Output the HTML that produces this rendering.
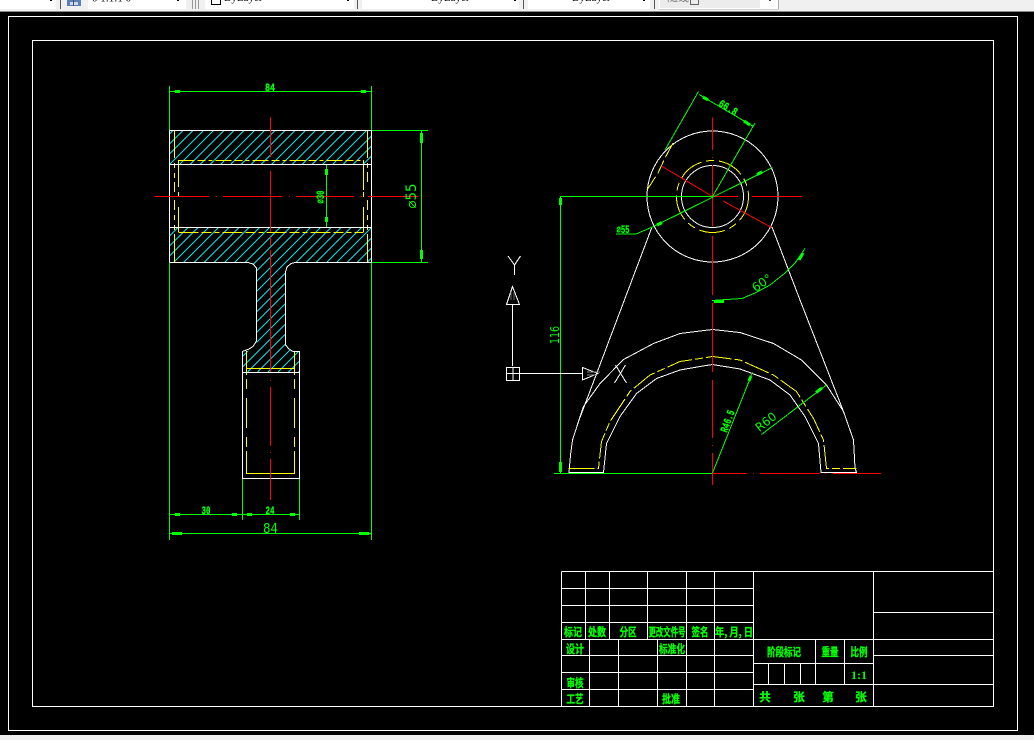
<!DOCTYPE html>
<html><head><meta charset="utf-8"><title>CAD</title>
<style>
html,body{margin:0;padding:0;background:#000;width:1034px;height:740px;overflow:hidden}
svg{display:block;position:absolute;left:0;top:0}
.w{stroke:#fff;fill:none}.y{stroke:#ff0;fill:none}.r{stroke:#f00;fill:none}.g{stroke:#0f0;fill:none}
.a{stroke:#0f0;stroke-width:3;fill:none}
text{fill:#0f0;font-family:"Liberation Sans","WenQuanYi Zen Hei","Noto Sans CJK SC",sans-serif}
.t{font-size:11.5px;font-weight:bold;text-anchor:middle;stroke:#0f0;stroke-width:.35px;font-family:"WenQuanYi Zen Hei","Noto Sans CJK SC",sans-serif}
.n{font-size:11px;font-weight:bold;text-anchor:middle;stroke:#0f0;stroke-width:.3px;font-family:"Liberation Mono",monospace}
.l{font-size:15px;text-anchor:middle;font-family:"DejaVu Sans",sans-serif;font-weight:normal}
.b{font-size:11px;fill:#000;font-family:"Liberation Serif",serif}
</style></head><body>
<svg width="1034" height="740" viewBox="0 0 1034 740" xmlns="http://www.w3.org/2000/svg">
<defs>
<clipPath id="hc">
<path d="M170 130H371V164H170Z"/>
<path d="M170 228H371V262H294Q285 264 285 273V340Q285 349 294 351H299V372H243V351H248Q257 349 257 340V273Q257 264 248 262H170Z"/>
</clipPath>
</defs>
<rect width="1034" height="740" fill="#000"/>
<!-- toolbar -->
<rect width="1034" height="11" fill="#f0f0f0"/>
<rect y="11" width="1034" height="1" fill="#8a8a8a"/>
<g shape-rendering="crispEdges">
<rect x="0" y="0" width="56" height="9" fill="#fff"/>
<rect x="50" y="0" width="2" height="1" fill="#000"/>
<rect x="60" y="0" width="1" height="9" fill="#555"/>
<rect x="67" y="0" width="14" height="6" fill="#5a7fb5"/>
<rect x="70" y="2" width="8" height="3" fill="#cfd8e8"/>
<rect x="73" y="0" width="1" height="6" fill="#34527f"/>
<rect x="88" y="0" width="98" height="9" fill="#fff"/>
<rect x="177" y="0" width="2" height="1" fill="#000"/>
<rect x="192" y="0" width="1" height="9" fill="#999"/><rect x="195" y="0" width="1" height="9" fill="#999"/><rect x="198" y="0" width="1" height="9" fill="#999"/>
<rect x="205" y="0" width="149" height="9" fill="#fff"/>
<rect x="347" y="0" width="2" height="1" fill="#000"/>
<rect x="357" y="0" width="1" height="9" fill="#555"/>
<rect x="362" y="0" width="157" height="9" fill="#fff"/>
<rect x="514" y="0" width="2" height="1" fill="#000"/>
<rect x="523" y="0" width="1" height="9" fill="#555"/>
<rect x="528" y="0" width="122" height="9" fill="#fff"/>
<rect x="643" y="0" width="2" height="1" fill="#000"/>
<rect x="654" y="0" width="1" height="9" fill="#555"/>
<rect x="659" y="0" width="119" height="9" fill="#fff"/>
<rect x="660" y="0" width="100" height="8" fill="#ececec"/>
<rect x="769" y="0" width="2" height="1" fill="#444"/>
<rect x="778" y="0" width="1" height="10" fill="#aaa"/>
<rect x="659" y="9" width="120" height="1" fill="#ccc"/>
<path d="M211.5 0V4.5H220.5V0" stroke="#000" fill="none"/>
<path d="M690.5 0V4.5H698.5V0" stroke="#666" fill="none"/>
</g>
<text class="b" x="92" y="1.5" style="stroke:none">0 1:1:1 0</text>
<text class="b" x="224" y="1">ByLayer</text>
<text class="b" x="431" y="1">ByLayer</text>
<text class="b" x="572" y="1">ByLayer</text>
<text class="b" x="667" y="1" style="fill:#777">随线</text>
<rect y="735" width="1034" height="5" fill="#f0f0f0"/>

<g shape-rendering="crispEdges" stroke-width="1">
<!-- frames -->
<rect class="w" x="8.5" y="16.5" width="1009" height="714"/>
<rect class="w" x="32.5" y="40.5" width="961" height="666"/>

<!-- left view hatch -->
<path clip-path="url(#hc)" stroke="#00e0e0" fill="none" d="M-68.7 372l242-242m-231.8 242l242-242m-231.8 242l242-242m-231.8 242l242-242m-231.8 242l242-242m-231.8 242l242-242m-231.8 242l242-242m-231.8 242l242-242m-231.8 242l242-242m-231.8 242l242-242m-231.8 242l242-242m-231.8 242l242-242m-231.8 242l242-242m-231.8 242l242-242m-231.8 242l242-242m-231.8 242l242-242m-231.8 242l242-242m-231.8 242l242-242m-231.8 242l242-242m-231.8 242l242-242m-231.8 242l242-242m-231.8 242l242-242m-231.8 242l242-242m-231.8 242l242-242m-231.8 242l242-242m-231.8 242l242-242m-231.8 242l242-242m-231.8 242l242-242m-231.8 242l242-242m-231.8 242l242-242m-231.8 242l242-242m-231.8 242l242-242m-231.8 242l242-242m-231.8 242l242-242m-231.8 242l242-242m-231.8 242l242-242m-231.8 242l242-242m-231.8 242l242-242m-231.8 242l242-242m-231.8 242l242-242m-231.8 242l242-242m-231.8 242l242-242m-231.8 242"/>

<!-- left view dims -->
<path class="g" d="M169.5 86V540M371.5 86V540M170 91.5H371"/>
<path class="a" d="M175 91.5H180M361 91.5H366"/>
<path class="g" d="M371 130.5H428M371 262.5H428M421.5 130.5V262.5"/>
<path class="a" d="M421.5 133V143M421.5 250V259"/>
<path class="g" d="M326.5 164.5V227.5"/>
<path class="a" d="M326.5 169V175M326.5 217V222"/>
<path class="g" d="M170 514.5H299.5M242.5 478V520M299.5 478V520"/>
<path class="a" d="M175 514.5H180M232 514.5H237M247 514.5H252M290 514.5H295"/>
<path class="g" d="M170 533.5H371"/>
<path class="a" d="M172 533.5H182M359 533.5H369"/>

<!-- left view yellow -->
<path class="y" d="M174.5 131V158M367.5 131V158M174.5 234V262M367.5 234V262M246.5 351V375M294.5 351V375"/>
<path class="y" d="M178.5 160.5H363.5" stroke-dasharray="16 3 8 3 4 3"/>
<path class="y" d="M178.5 232.5H363.5" stroke-dasharray="20 3 10 3 5 3"/>
<path class="y" d="M174.5 163V168M174.5 173V178M174.5 182V192M174.5 200V210M174.5 215V220M174.5 225V230M367.5 163V168M367.5 172V182M367.5 200V210M367.5 215V220M367.5 225V230"/>
<path class="y" d="M178.5 160V187M178.5 192V197M178.5 207V232M363.5 160V190M363.5 192V197M363.5 207V232"/>
<path class="y" d="M246.5 368.5H294.5"/>
<path class="y" d="M246.5 379V389M246.5 398V428M246.5 437V447M246.5 452V460M246.5 451V473.5H294.5V451M294.5 379V389M294.5 398V428M294.5 437V447"/>

<!-- left view white -->
<path class="w" d="M169.5 130.5H371.5V262.5M169.5 130.5V262.5M169.5 164.5H371.5M169.5 227.5H371.5"/>
<path class="w" d="M169.5 262.5H248L253 264L256.5 268V272V341L253 346.5L249 349L242.5 351.5V478.5H299.5V351.5H293L289 349L285.5 345V272L287 267L291 263.5L295 262.5H371.5"/>
<path class="w" d="M242.5 372.5H299.5"/>

<!-- left view red -->
<path class="r" d="M154 196.5H209M216 196.5H217M223 196.5H282M289 196.5H290M296 196.5H354M361 196.5H362M368 196.5H418"/>
<path class="r" d="M270.5 117V157M270.5 171V232M270.5 237V246M270.5 250V372M270.5 380V381M270.5 387V446M270.5 452V453M270.5 459V500"/>

<!-- right view -->
<circle class="w" cx="712.5" cy="196.5" r="65.5"/>
<circle class="w" cx="712.5" cy="196.5" r="31"/>
<circle class="y" cx="712.5" cy="196.5" r="36" stroke-dasharray="26 5 8 5"/>
<path class="y" d="M673 143L665 158L658 173L647 190" stroke-dasharray="16 4 14 4"/>

<path class="w" d="M652 227L578.5 421.5L572.5 440L570.5 455L569 472.5H603.5L606.5 443.5L620 416.5L636.5 393.5L656.5 378.5L680 370L700 366.5L712.5 364.5L740 369L770 380L790 395L805 416.5L818.5 443.5L821 472.5H856.5L855 468L853.5 440L843.5 411.5L800 300L772 227"/>
<path class="w" d="M578.5 421.5L583.5 406.5L600 383.5L623.5 359.5L653.5 343.5L680 333.5L700 331L712.5 329.5L740 332.5L773.5 343.5L801.5 360L826.5 385L843.5 411.5"/>
<path class="y" d="M568.5 468.5H598.5L601.5 441.5L610 421.5L630 391.5L650 375L680 361.5L700 358.5L712.5 356.5L740 360L773.5 375L796.5 391.5L813.5 418.5L823.5 440L826.5 468.5H856.5" stroke-dasharray="26 3 8 3"/>

<!-- right view red -->
<path class="r" d="M712.5 117.5V150M712.5 157V158M712.5 165V226M712.5 236V295M712.5 303V372M712.5 380V438M712.5 445V446M712.5 453V485"/>
<path class="r" d="M712 196.5H738M752 196.5H802"/>
<path class="r" d="M661.5 166L712.5 196.5M723 201L771.5 227.5"/>
<path class="r" d="M712 473.5H747M753 473.5H754M760 473.5H820M825 473.5H826M833 473.5H881"/>

<!-- right view dims -->
<path class="g" d="M560 196.5H712.5M560.5 196.5V473M554 473.5H712"/>
<path class="a" d="M560.5 198V205M560.5 462V472"/>
<path class="g" d="M712.5 196.5L755 123M699 94.5L753.5 126.5M698.5 91.5L665 150"/>
<path class="a" d="M703 97L708 100M744 121L750 125"/>
<path class="g" d="M772.5 167.5L653.5 226.5L636 234H616"/>
<path class="a" d="M762 172L757 174.5M657 225L662 222.5"/>
<path class="g" d="M712 300.5L742 298.5L755 293L770 285L785 273L795 263L805 248.5"/>
<path class="a" d="M714 301.5H724M803 253L799 260"/>
<path class="g" d="M712.5 473L752.5 372.5M826.5 385L761.5 434.5"/>
<path class="a" d="M751 376L749 381M822 388L816 392.5"/>

<!-- UCS -->
<path class="w" d="M512.5 366V304M520 373.5H582M506.5 367.5H519.5V380.5H506.5ZM513 367V380M507 373.5H520"/>
<path class="w" d="M506.5 304.5H519.5L512.5 286.5Z"/>
<path d="M511 300V292M514 300V292" stroke="#666"/>
<path class="w" d="M582.5 367.5V380L598 373.5Z"/>
<path d="M587 372H600M587 375H597" stroke="#888"/>
<path class="w" d="M508 256L514.5 265L520.5 256M514.5 265V275M615.5 365L626.5 383M625.5 365L614.5 383"/>

<!-- title block -->
<path class="w" d="M561.5 571.5H993M561.5 571.5V706M561.5 588.5H753M561.5 605.5H753M561.5 622.5H753M561.5 639.5H993M561.5 655.5H753M561.5 672.5H753M561.5 689.5H753"/>
<path class="w" d="M585.5 571.5V639M609.5 571.5V639M647.5 571.5V639M686.5 571.5V706M714.5 571.5V706M753.5 571.5V706M873.5 571.5V706"/>
<path class="w" d="M589.5 639.5V706M618.5 639.5V706M657.5 639.5V706"/>
<path class="w" d="M753 663.5H873M753 684.5H993M873 612.5H993M873 655.5H993M815.5 639.5V684M844.5 639.5V684M768.5 663V684M784.5 663V684M800.5 663V684"/>
</g>

<!-- dim text -->
<text class="n" x="270" y="91" textLength="10" lengthAdjust="spacingAndGlyphs">84</text>
<text class="n" x="206" y="514" textLength="9" lengthAdjust="spacingAndGlyphs">30</text>
<text class="n" x="270" y="514" textLength="9" lengthAdjust="spacingAndGlyphs">24</text>
<text class="l" x="270.5" y="533" style="font-size:13px" textLength="15" lengthAdjust="spacingAndGlyphs">84</text>
<text class="l" transform="translate(421 196) rotate(-90)" x="0" y="-5" style="font-size:14px" textLength="25" lengthAdjust="spacingAndGlyphs">⌀55</text>
<text class="n" transform="translate(325 197) rotate(-90)" x="0" y="-1" textLength="13" lengthAdjust="spacingAndGlyphs">⌀30</text>
<text class="n" transform="translate(728 108) rotate(31)" x="0" y="3" textLength="20" lengthAdjust="spacingAndGlyphs">66.8</text>
<text class="n" x="623" y="233" textLength="13" lengthAdjust="spacingAndGlyphs">⌀55</text>
<text class="l" style="font-size:12px" transform="translate(762 283) rotate(-35)" x="0" y="4">60°</text>
<text class="l" style="font-size:12px" transform="translate(559 335) rotate(-90)" x="0" y="0" textLength="18" lengthAdjust="spacingAndGlyphs">116</text>
<text class="n" transform="translate(727 421) rotate(-70)" x="0" y="4" textLength="23" lengthAdjust="spacingAndGlyphs">R46.5</text>
<text class="l" style="font-size:12px" transform="translate(766 422) rotate(-38)" x="0" y="4" textLength="23" lengthAdjust="spacingAndGlyphs">R60</text>

<!-- title text -->
<text class="t" x="573" y="636" textLength="18" lengthAdjust="spacingAndGlyphs">标记</text>
<text class="t" x="597" y="636" textLength="18" lengthAdjust="spacingAndGlyphs">处数</text>
<text class="t" x="628" y="636" textLength="17" lengthAdjust="spacingAndGlyphs">分区</text>
<text class="t" x="667" y="636" textLength="37" lengthAdjust="spacingAndGlyphs">更改文件号</text>
<text class="t" x="700" y="636" textLength="17" lengthAdjust="spacingAndGlyphs">签名</text>
<text class="t" x="734" y="636" textLength="38" lengthAdjust="spacingAndGlyphs">年, 月, 日</text>
<text class="t" x="575" y="653" textLength="18" lengthAdjust="spacingAndGlyphs">设计</text>
<text class="t" x="672" y="653" textLength="26" lengthAdjust="spacingAndGlyphs">标准化</text>
<text class="t" x="575" y="687" textLength="17" lengthAdjust="spacingAndGlyphs">审核</text>
<text class="t" x="575" y="703" textLength="17" lengthAdjust="spacingAndGlyphs">工艺</text>
<text class="t" x="671" y="703" textLength="18" lengthAdjust="spacingAndGlyphs">批准</text>
<text class="t" x="784" y="656" textLength="34" lengthAdjust="spacingAndGlyphs">阶段标记</text>
<text class="t" x="830" y="656" textLength="17" lengthAdjust="spacingAndGlyphs">重量</text>
<text class="t" x="859" y="656" textLength="17" lengthAdjust="spacingAndGlyphs">比例</text>
<text class="n" x="859" y="679" style="font-family:'Liberation Serif',serif;font-size:12px;stroke:none">1:1</text>
<text class="t" x="765" y="701">共</text>
<text class="t" x="799" y="701">张</text>
<text class="t" x="828" y="701">第</text>
<text class="t" x="861" y="701">张</text>
</svg>
</body></html>
